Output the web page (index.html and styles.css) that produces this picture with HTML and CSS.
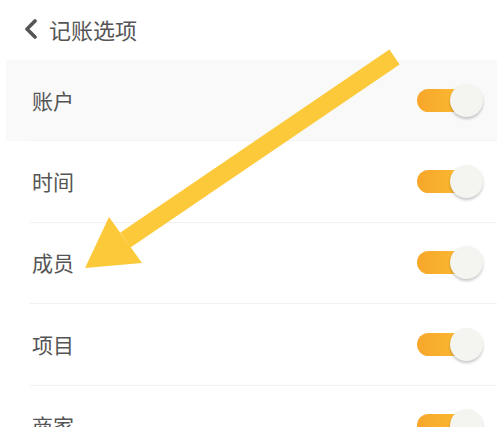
FILE: index.html
```html
<!DOCTYPE html>
<html lang="zh">
<head>
<meta charset="utf-8">
<link rel="stylesheet" href="styles.css">
</head>
<body>
<div class="page">
  <header class="header">
    <svg class="back" width="16" height="20" viewBox="0 0 16 20"><path d="M12 2 L4 10 L12 18" fill="none" stroke="#555" stroke-width="3.6" stroke-linecap="round" stroke-linejoin="round"/></svg>
    <span class="title">记账选项</span>
  </header>
  <div class="list">
    <div class="row pressed"><div class="row-inner"><span class="label">账户</span><span class="toggle"><span class="knob"></span></span></div></div>
    <div class="row"><div class="row-inner"><span class="label">时间</span><span class="toggle"><span class="knob"></span></span></div></div>
    <div class="row"><div class="row-inner"><span class="label">成员</span><span class="toggle"><span class="knob"></span></span></div></div>
    <div class="row"><div class="row-inner"><span class="label">项目</span><span class="toggle"><span class="knob"></span></span></div></div>
    <div class="row"><div class="row-inner"><span class="label">商家</span><span class="toggle"><span class="knob"></span></span></div></div>
  </div>
  <svg class="arrow" width="497" height="427" viewBox="0 0 497 427">
    <polygon points="389.4,49.6 399.6,64.4 130.5,247.4 120.4,232.6" fill="#fcc93a"/>
    <polygon points="109,217 142,263 85,268" fill="#fcc93a"/>
  </svg>
</div>
</body>
</html>
```
FILE: styles.css
```css
html, body {
  margin: 0;
  padding: 0;
  background: #ffffff;
}
.page {
  position: relative;
  width: 497px;
  height: 427px;
  overflow: hidden;
  font-family: "Noto Sans CJK SC", "Noto Sans", sans-serif;
  color: #555555;
}
.header {
  height: 60px;
  display: flex;
  align-items: center;
  padding-left: 23px;
  padding-bottom: 3px;
  box-sizing: border-box;
}
.back {
  display: block;
  margin-right: 10px;
}
.title {
  font-size: 22px;
  line-height: 1;
  color: #555555;
}
.list {
  margin-left: 6px;
}
.row {
  padding-left: 24px;
}
.row.pressed {
  background: #f9f9f9;
}
.row-inner {
  height: 81.4px;
  box-sizing: border-box;
  border-bottom: 1px solid #f1f1f1;
  display: flex;
  align-items: center;
  justify-content: space-between;
  padding-left: 2px;
  padding-right: 14px;
}
.label {
  font-size: 21px;
  color: #555555;
  line-height: 1;
}
.toggle {
  position: relative;
  width: 66px;
  height: 33px;
  display: block;
}
.toggle::before {
  content: "";
  position: absolute;
  left: 0;
  top: 5px;
  width: 56px;
  height: 23px;
  border-radius: 12px;
  background: linear-gradient(90deg, #f7a62a, #fdbf35);
}
.knob {
  position: absolute;
  right: 0;
  top: 0;
  width: 33px;
  height: 33px;
  border-radius: 50%;
  background: #f4f4f0;
  box-shadow: 0 2px 3px rgba(0, 0, 0, 0.22);
}
.arrow {
  position: absolute;
  left: 0;
  top: 0;
  pointer-events: none;
}
```
